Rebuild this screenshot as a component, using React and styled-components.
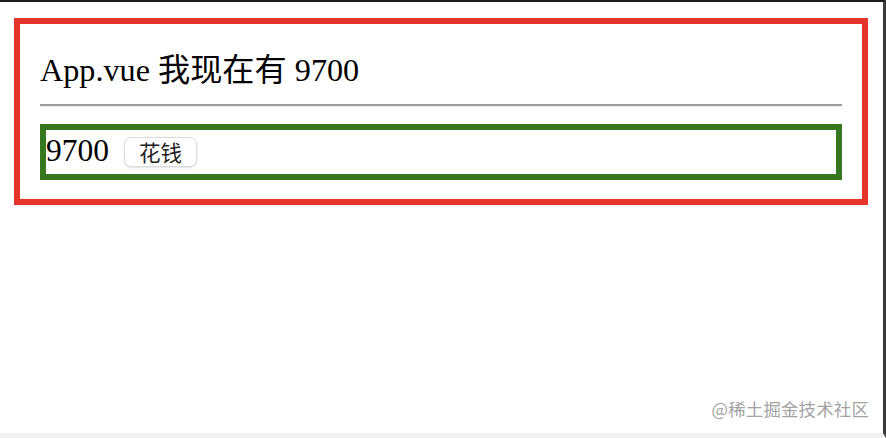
import React, { useState } from "react";
import styled, { createGlobalStyle } from "styled-components";

const Global = createGlobalStyle`
  html, body { margin: 0; padding: 0; background: #fff; }
  body { font-family: "Liberation Serif", "Noto Sans CJK SC", serif; }
`;

const Frame = styled.div`
  box-sizing: border-box;
  width: 886px;
  height: 438px;
  border-top: 2px solid #1c1c1c;
  border-right: 3px solid #3a3a3a;
  border-bottom: 5px solid #f1f1f1;
  padding: 16px 15px 0 14px;
  display: flex;
  flex-direction: column;
  position: relative;
`;

const Parent = styled.section`
  box-sizing: border-box;
  border: 6px solid #e5342a;
  padding: 0 20px 19px;
  display: flex;
  flex-direction: column;
`;

const Heading = styled.h2`
  margin: 27px 0 15px;
  font-size: 32.2px;
  font-weight: normal;
  line-height: 38px;
  color: #000;
  font-family: "Liberation Serif", "Noto Sans CJK SC", serif;
`;

const Rule = styled.hr`
  margin: 0 0 17px;
  border: none;
  border-top: 2px solid #9c9c9c;
  border-bottom: 1px solid #eeeeee;
  height: 0;
`;

const Child = styled.div`
  box-sizing: border-box;
  border: 6px solid #36781f;
  height: 56px;
  display: flex;
  align-items: center;
  gap: 15px;
`;

const Amount = styled.span`
  font-size: 31.5px;
  line-height: 1;
  color: #000;
  margin-top: -2px;
`;

const SpendButton = styled.button`
  box-sizing: border-box;
  height: 30px;
  padding: 0 14px;
  border: 1px solid #dcdcdc;
  border-radius: 7px;
  background: #fff;
  box-shadow: 0 1px 2px rgba(0, 0, 0, 0.12);
  font-family: "Noto Sans CJK SC", sans-serif;
  font-size: 21.5px;
  line-height: 26px;
  color: #222;
  cursor: pointer;
  margin-top: 0;
`;

const Watermark = styled.div`
  position: absolute;
  right: 14px;
  bottom: 12px;
  font-family: "Noto Sans CJK SC", sans-serif;
  font-size: 17.4px;
  color: #a3a3a3;
  letter-spacing: 0.2px;
`;

export default function App() {
  const [money, setMoney] = useState(9700);
  return (
    <>
      <Global />
      <Frame>
        <Parent>
          <Heading>App.vue 我现在有 {money}</Heading>
          <Rule />
          <Child>
            <Amount>{money}</Amount>
            <SpendButton onClick={() => setMoney((m) => m)}>花钱</SpendButton>
          </Child>
        </Parent>
        <Watermark>@稀土掘金技术社区</Watermark>
      </Frame>
    </>
  );
}
